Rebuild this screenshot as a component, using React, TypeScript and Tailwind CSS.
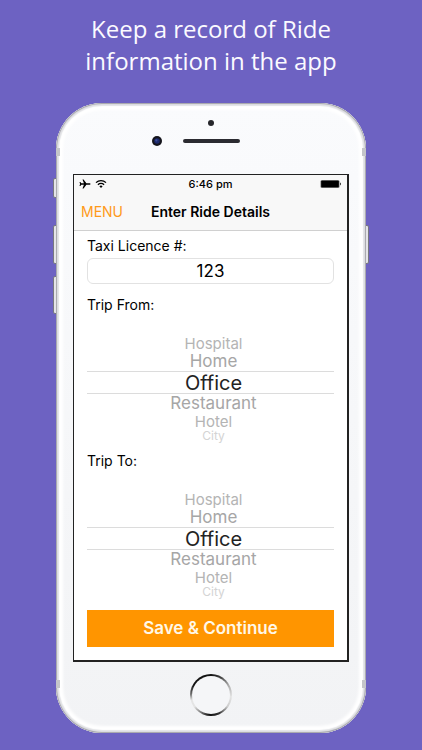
import { useState } from "react";

const PLACES = ["Hospital", "Home", "Office", "Restaurant", "Hotel", "City"];

// one entry per visible slot of the wheel, top to bottom; the third is the selected one
const SLOTS = [
  "h-[17px] text-[15px] text-[#b4b4b4]",
  "h-[19px] text-[17px] text-[#a6a6a6]",
  "h-[23px] text-xl text-[#222222] border-y border-[#dcdcdc]",
  "h-[19px] text-[17px] text-[#a6a6a6]",
  "h-[17px] text-[15px] text-[#b4b4b4]",
  "h-3 text-xs text-[#d4d4d4]",
];

function Wheel({ label }: { label: string }) {
  const [selected, setSelected] = useState(2);

  return (
    <section>
      <h2 className="mt-[9px] h-5 text-sm leading-5">{label}</h2>
      <div role="listbox" aria-label={label} className="mt-5 flex flex-col">
        {SLOTS.map((slot, i) => {
          const index = selected + i - 2;
          const place = PLACES[index];
          return (
            <button
              key={i}
              type="button"
              role="option"
              aria-selected={index === selected}
              disabled={!place}
              onClick={() => setSelected(index)}
              className={`flex w-full items-center justify-center pl-[6px] leading-none ${slot}`}
            >
              {place}
            </button>
          );
        })}
      </div>
    </section>
  );
}

function StatusBar() {
  return (
    <div className="grid h-[18px] grid-cols-3 items-center px-[5px]">
      <div className="flex items-center gap-1">
        <svg width="12" height="10" viewBox="0 0 12 10" aria-label="Airplane mode">
          <path d="M11.6 5c0 .5-.6.8-1.3.8H7.4L4.6 9.6H3.5l1.4-3.8H2.4L1.3 7.1H.5L1.1 5 .5 2.9h.8l1.1 1.3h2.5L3.5.4h1.1l2.8 3.8h2.9c.7 0 1.3.3 1.3.8z" fill="#000" />
        </svg>
        <svg width="12" height="10" viewBox="0 0 12 10" fill="none" stroke="#000" strokeWidth="1.3" aria-label="Wi-Fi">
          <path d="M1 3.6a7.2 7.2 0 0 1 10 0" />
          <path d="M2.9 5.7a4.5 4.5 0 0 1 6.2 0" />
          <path d="M6 9 4.4 7.3a2.3 2.3 0 0 1 3.2 0z" fill="#000" stroke="none" />
        </svg>
      </div>
      <span className="text-center text-[11px] leading-none font-medium">6:46 pm</span>
      <svg className="justify-self-end" width="22" height="10" viewBox="0 0 22 10" aria-label="Battery full">
        <rect x="0.5" y="1" width="19" height="8" rx="1.5" fill="#777" />
        <rect x="1.2" y="1.7" width="17.6" height="6.6" rx="0.8" fill="#000" />
        <path d="M20 3.6c1.1.2 1.1 2.6 0 2.8z" fill="#000" />
      </svg>
    </div>
  );
}

function RideScreen() {
  return (
    <div className="border border-r-2 border-b-2 border-[#222222] bg-white text-black">
      <header className="border-b border-[#d0d0d0] bg-[#f8f8f8]">
        <StatusBar />
        <div className="grid h-[37px] grid-cols-[1fr_auto_1fr] items-center px-[7px]">
          <button type="button" className="justify-self-start text-sm text-[#ff9a1a]">
            MENU
          </button>
          <h1 className="text-sm font-semibold">Enter Ride Details</h1>
        </div>
      </header>

      <form className="px-[13px] pt-[5px] pb-[13px]" onSubmit={(e) => e.preventDefault()}>
        <label htmlFor="licence" className="block h-5 text-sm leading-5">
          Taxi Licence #:
        </label>
        <input
          id="licence"
          type="text"
          defaultValue="123"
          className="mt-[2px] mb-[11px] block h-[26px] w-full rounded-md border border-[#e2e2e2] text-center text-[17px]"
        />
        <Wheel label="Trip From:" />
        <Wheel label="Trip To:" />
        <button type="submit" className="mt-3 block h-[37px] w-full bg-[#ff9500] text-[17px] font-semibold text-[#fff8e8]">
          Save &amp; Continue
        </button>
      </form>
    </div>
  );
}

function Phone() {
  return (
    <div className="relative mx-14">
      {/* side keys */}
      <div className="absolute inset-y-0 -left-[3px] flex flex-col pt-[75px]">
        <div className="h-5 w-1 rounded-l-xs border border-[#77777f] bg-[#e4e4e8]" />
        <div className="mt-[27px] h-[39px] w-1 rounded-l-xs border border-[#77777f] bg-[#e4e4e8]" />
        <div className="mt-3 h-[38px] w-1 rounded-l-xs border border-[#77777f] bg-[#e4e4e8]" />
      </div>
      <div className="absolute inset-y-0 -right-[3px] flex flex-col pt-[122px]">
        <div className="h-[39px] w-1 rounded-r-xs border border-[#77777f] bg-[#e4e4e8]" />
      </div>

      <div className="relative overflow-hidden rounded-[46px] bg-linear-to-b from-[#fafbfd] to-[#f2f3f5] px-[17px] pb-[17px] shadow-[inset_0_0_1px_1px_#a3a3a9,inset_0_0_1px_3px_#e3e4e7,inset_0_0_3px_7px_#ffffff]">
        {/* antenna bands */}
        <div className="pointer-events-none absolute inset-0 grid grid-cols-2 content-between py-[45px]">
          <div className="h-2 w-1 bg-[#c4c5c9]" />
          <div className="h-2 w-1 justify-self-end bg-[#c4c5c9]" />
          <div className="h-2 w-1 bg-[#c4c5c9]" />
          <div className="h-2 w-1 justify-self-end bg-[#c4c5c9]" />
        </div>

        <svg className="mx-auto block h-[71px] w-[130px]" viewBox="0 0 130 71" aria-hidden="true">
          <circle cx="65" cy="20" r="3" fill="#26262b" />
          <circle cx="11" cy="38" r="5" fill="#15151c" />
          <circle cx="11" cy="38" r="2.8" fill="#1d2a6b" />
          <circle cx="10.4" cy="37.4" r="1.1" fill="#3c4c9c" />
          <rect x="37" y="36" width="57" height="4" rx="2" fill="#2b2b31" />
        </svg>

        <RideScreen />

        <button
          type="button"
          aria-label="Home"
          className="mx-auto mt-3 block size-[42px] rounded-full bg-[conic-gradient(#111_0deg,#444_30deg,#aaa_60deg,#e4e4e4_95deg,#ccc_125deg,#333_155deg,#111_185deg,#777_210deg,#e4e4e4_235deg,#e4e4e4_255deg,#666_275deg,#111_300deg,#111_360deg)] p-[2px]"
        >
          <span className="block size-full rounded-full bg-[#f5f6f8]" />
        </button>
      </div>
    </div>
  );
}

export default function App() {
  return (
    <main className="min-h-screen bg-[#6d62c2] pt-[13px] pb-4 font-['Inter','Liberation_Sans',sans-serif]">
      <p className="mx-auto mb-[26px] max-w-[300px] text-center font-['Open_Sans','Noto_Sans',sans-serif] text-2xl leading-8 text-[#fbfaff]">
        Keep a record of Ride information in the app
      </p>
      <Phone />
    </main>
  );
}
